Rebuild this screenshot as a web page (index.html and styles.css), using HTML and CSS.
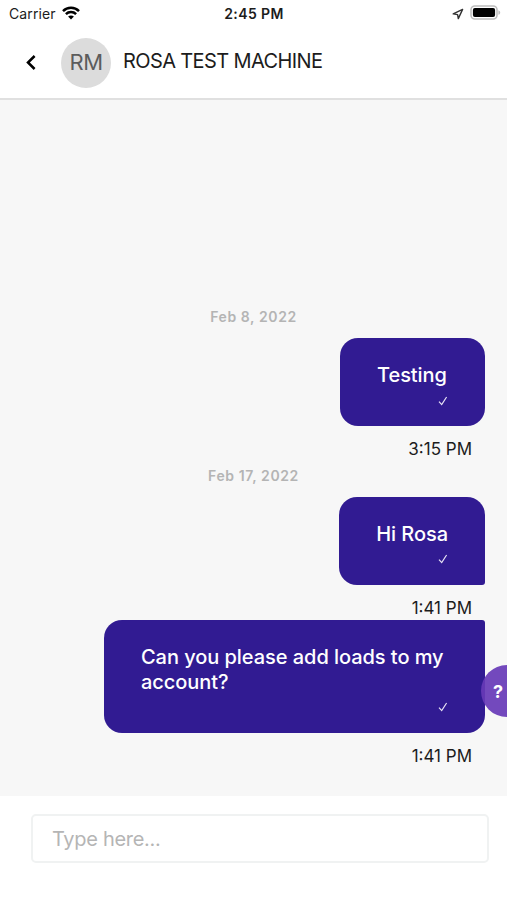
FILE: index.html
```
<!DOCTYPE html>
<html lang="en">
<head>
    <meta charset="UTF-8">
    <meta name="viewport" content="width=device-width, initial-scale=1.0">
    <title>Rosa Test Machine</title>
    <link rel="stylesheet" href="styles.css">
</head>
<body>
    <div class="status-bar">
        <div class="status-left">
            <span class="carrier">Carrier</span>
            <svg class="wifi" width="18" height="14" viewBox="0 0 18 14" fill="none" stroke="#000" stroke-width="2.5">
                <path d="M1 5.1C5.4 .7 12.6 .7 17 5.1"/>
                <path d="M3.9 8.2c2.8-2.8 7.4-2.8 10.2 0"/>
                <path d="M9 13.5L6.1 10.6c1.6-1.6 4.2-1.6 5.8 0z" fill="#000" stroke="none"/>
            </svg>
        </div>
        <span class="clock">2:45 PM</span>
        <div class="status-right">
            <svg class="location" width="12" height="12" viewBox="0 0 12 12" fill="none" stroke="#333" stroke-width="1.4" stroke-linejoin="round">
                <path d="M10.6 1.4L1.2 5.9l4.4.7.7 4z"/>
            </svg>
            <svg class="battery" width="31" height="15" viewBox="0 0 31 15">
                <rect x="1" y="1" width="26" height="13" rx="3.8" fill="#fff" stroke="#bdbdbd" stroke-width="1.6"/>
                <rect x="2.9" y="2.9" width="22.2" height="9.2" rx="2" fill="#000"/>
                <path d="M28.4 5.2c2.4.8 2.4 3.8 0 4.6z" fill="#bdbdbd"/>
            </svg>
        </div>
    </div>

    <header class="header">
        <svg class="back" width="12" height="16" viewBox="0 0 12 16" fill="none" stroke="#000" stroke-width="2.5">
            <path d="M9.6 1L3 7.5l6.6 6.5"/>
        </svg>
        <div class="avatar">RM</div>
        <h1 class="name">ROSA TEST MACHINE</h1>
    </header>

    <main class="chat">
        <div class="date">Feb 8, 2022</div>
        <div class="message">
            <div class="bubble">
                <p>Testing</p>
                <svg class="check" width="10" height="10" viewBox="0 0 10 10"><path d="M1 5.6l2.7 3L8.6 1"/></svg>
            </div>
            <div class="time">3:15 PM</div>
        </div>
        <div class="date">Feb 17, 2022</div>
        <div class="message">
            <div class="bubble first">
                <p>Hi Rosa</p>
                <svg class="check" width="10" height="10" viewBox="0 0 10 10"><path d="M1 5.6l2.7 3L8.6 1"/></svg>
            </div>
            <div class="time">1:41 PM</div>
        </div>
        <div class="message">
            <div class="bubble last">
                <p>Can you please add loads to my account?</p>
                <svg class="check" width="10" height="10" viewBox="0 0 10 10"><path d="M1 5.6l2.7 3L8.6 1"/></svg>
            </div>
            <div class="time">1:41 PM</div>
        </div>
    </main>

    <form class="composer">
        <input type="text" placeholder="Type here...">
    </form>

    <button class="help" type="button">?</button>
</body>
</html>
```
FILE: styles.css
```
* {
    box-sizing: border-box;
}
body {
    position: relative;
    display: flex;
    flex-direction: column;
    height: 100vh;
    margin: 0;
    font-family: Inter, sans-serif;
    color: #1c1c1c;
    background-color: #fff;
}
.status-bar {
    display: grid;
    grid-template-columns: 1fr auto 1fr;
    align-items: center;
    height: 27px;
    padding: 0 6px 0 9px;
}
.status-left,
.status-right {
    display: flex;
    align-items: center;
}
.status-left {
    gap: 6px;
}
.status-right {
    justify-content: flex-end;
    gap: 6px;
}
.carrier {
    font-size: 14px;
    letter-spacing: 0.1px;
}
.clock {
    margin-right: 2px;
    font-size: 14px;
    font-weight: 600;
    letter-spacing: 0.4px;
}
.wifi,
.battery {
    margin-top: -2px;
}
.header {
    display: flex;
    align-items: center;
    height: 73px;
    padding: 0 25px;
    border-bottom: 2px solid #e0e0e0;
}
.avatar {
    width: 50px;
    height: 50px;
    margin-left: 24px;
    border-radius: 50%;
    background-color: #dcdcdc;
    color: #5c5c5c;
    font-size: 22px;
    line-height: 49px;
    letter-spacing: -0.4px;
    text-align: center;
}
.name {
    margin: 0 0 4px 12px;
    font-size: 20px;
    font-weight: 400;
    letter-spacing: -0.62px;
}
.chat {
    display: flex;
    flex: 1;
    flex-direction: column;
    justify-content: flex-end;
    padding: 0 22px 28px;
    background-color: #f7f7f7;
}
.date {
    height: 35px;
    padding-top: 4px;
    color: #b4b4b4;
    font-size: 14px;
    font-weight: 600;
    line-height: 20px;
    letter-spacing: 0.6px;
    text-align: center;
}
.message {
    display: flex;
    flex-direction: column;
    align-items: flex-end;
}
.bubble {
    position: relative;
    min-width: 145px;
    max-width: 381px;
    padding: 25px 37px 38.5px;
    border-radius: 18px;
    background-color: #311b92;
    color: #fff;
}
.bubble.first {
    border-bottom-right-radius: 3px;
}
.bubble.last {
    border-top-right-radius: 3px;
}
.bubble p {
    margin: 0;
    font-size: 20px;
    font-weight: 500;
    line-height: 24.5px;
    letter-spacing: -0.05px;
}
.check {
    position: absolute;
    right: 37px;
    bottom: 20.5px;
    fill: none;
    stroke: #e8e4f5;
    stroke-width: 1.2;
}
.time {
    height: 35.5px;
    padding: 12px 13px 0 0;
    font-size: 17px;
    line-height: 22px;
}
.composer {
    height: 104px;
    padding: 18px 18px 0 31px;
}
.composer input {
    width: 100%;
    height: 49px;
    padding: 0 19px;
    border: 2px solid #f0f2f2;
    border-radius: 5px;
    outline: none;
    font-family: inherit;
    font-size: 20px;
    letter-spacing: -0.3px;
}
.composer input::placeholder {
    color: #b5b5b5;
}
.help {
    position: absolute;
    top: 665px;
    right: 0;
    width: 26px;
    height: 52px;
    padding: 0 0 0 8px;
    border: none;
    border-radius: 26px 0 0 26px;
    background-color: rgba(103, 58, 183, 0.92);
    color: #fff;
    font-family: inherit;
    font-size: 18px;
    font-weight: 700;
}
```
